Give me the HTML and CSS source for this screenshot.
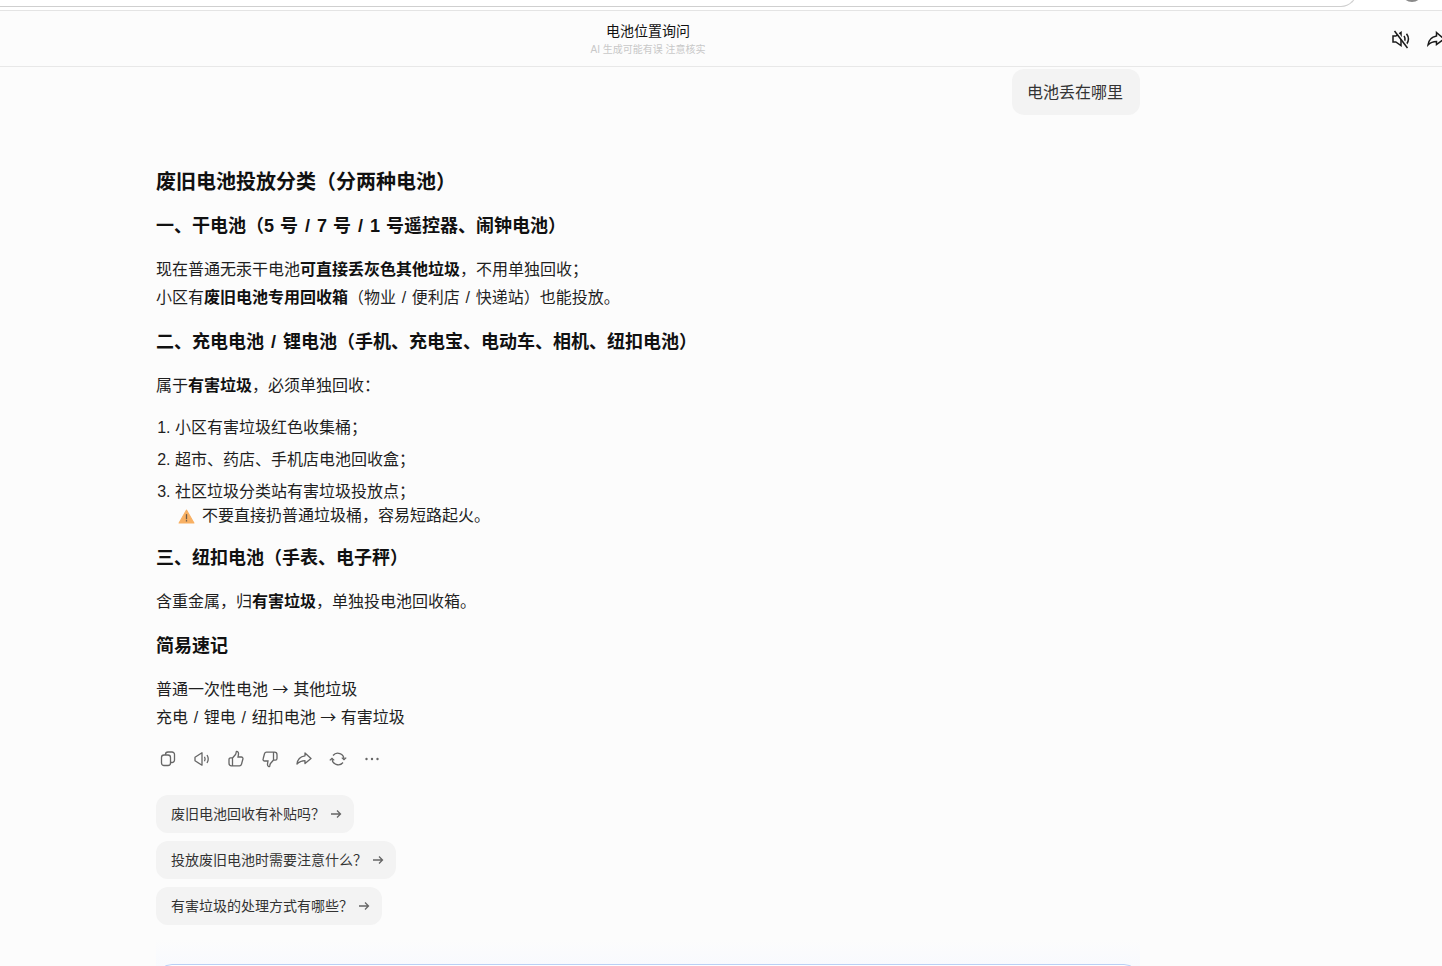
FILE: index.html
```html
<!DOCTYPE html>
<html lang="zh-CN">
<head>
    <meta charset="UTF-8">
    <meta name="viewport" content="width=device-width, initial-scale=1.0">
    <title>电池位置询问</title>
    <link rel="stylesheet" href="styles.css">
</head>
<body>
    <div class="browser-top">
        <div class="address-bar"></div>
        <div class="avatar"></div>
    </div>

    <div class="header">
        <div class="header-title">
            <div class="title">电池位置询问</div>
            <div class="subtitle">AI 生成可能有误 注意核实</div>
        </div>
        <div class="header-icons">
            <svg class="head-icon" viewBox="0 0 20 20">
                <path d="M2 7h2.800L10 3.500v13L4.800 13H2z"/>
                <path d="M13 7c1.200 1.800 1.200 4.200 0 6M15.500 4.800c2.400 3.200 2.400 7.200 0 10.400"/>
                <path class="slash-gap" d="M4.800 1.500l13 17"/>
                <path d="M3.500 2l13 17"/>
            </svg>
            <svg class="head-icon" viewBox="0 0 20 20">
                <path d="M10.500 3.500l7.500 6.500-7.500 5.500v-3c-3.500 0-6 1-8.500 3.500.5-4.500 3.500-8 8.500-9z"/>
            </svg>
        </div>
    </div>

    <div class="chat">
        <div class="user-row">
            <div class="user-bubble">电池丢在哪里</div>
        </div>

        <div class="answer">
            <h2>废旧电池投放分类（分两种电池）</h2>

            <h3>一、干电池（5 号 <span class="sep">/</span> 7 号 <span class="sep">/</span> 1 号遥控器、闹钟电池）</h3>
            <p>现在普通无汞干电池<strong>可直接丢灰色其他垃圾</strong>，不用单独回收；<br>
            小区有<strong>废旧电池专用回收箱</strong>（物业 / 便利店 / 快递站）也能投放。</p>

            <h3>二、充电电池 <span class="sep">/</span> 锂电池（手机、充电宝、电动车、相机、纽扣电池）</h3>
            <p>属于<strong>有害垃圾</strong>，必须单独回收：</p>
            <ol>
                <li>小区有害垃圾红色收集桶；</li>
                <li>超市、药店、手机店电池回收盒；</li>
                <li>社区垃圾分类站有害垃圾投放点；<br>
                    <span class="warning">
                        <svg class="warn-icon" viewBox="0 0 16 16">
                            <path d="M8 2L15 14.200H1z" fill="#f8b063" stroke="#f8b063" stroke-linejoin="round"/>
                            <rect x="7.400" y="5.800" width="1.200" height="4.800" fill="#6b5a48"/>
                            <rect x="7.400" y="11.400" width="1.200" height="1.300" fill="#6b5a48"/>
                        </svg>
                        不要直接扔普通垃圾桶，容易短路起火。
                    </span>
                </li>
            </ol>

            <h3>三、纽扣电池（手表、电子秤）</h3>
            <p>含重金属，归<strong>有害垃圾</strong>，单独投电池回收箱。</p>

            <h3>简易速记</h3>
            <p>普通一次性电池<span class="text-arrow"> → </span>其他垃圾<br>
            充电 / 锂电 / 纽扣电池<span class="text-arrow"> → </span>有害垃圾</p>
        </div>

        <div class="actions">
            <svg class="action-icon" viewBox="0 0 18 18">
                <rect x="2.500" y="5" width="9" height="10.500" rx="2.500"/>
                <path d="M6.500 5V4.500a2.500 2.500 0 0 1 2.500-2.500h4a2.500 2.500 0 0 1 2.500 2.500v5.500a2.500 2.500 0 0 1-2.500 2.500h-1.500"/>
            </svg>
            <svg class="action-icon" viewBox="0 0 18 18">
                <path d="M2 7.200L9 2.800v12.400L2 10.800z" stroke-linejoin="round"/>
                <path d="M11.500 6.800c.8 1.400.8 3 0 4.400M14 5c1.600 2.600 1.600 5.400 0 8"/>
            </svg>
            <svg class="action-icon" viewBox="0 0 18 18">
                <path d="M2 9.500c0-1 .7-1.700 1.700-1.700H5.500v8H4.500A2.500 2.500 0 0 1 2 13.300zM5.500 8l3-3.500c.6-.8.700-1.500.7-2.400 0-1.300 2.600-.8 2.300 2L11 7h3.400c1 0 1.800 1 1.500 2l-1.400 5.200c-.3 1-1.100 1.600-2 1.600H5.500"/>
            </svg>
            <svg class="action-icon" viewBox="0 0 18 18">
                <path d="M16 8.500c0 1-.7 1.700-1.700 1.700H12.500v-8h1A2.500 2.500 0 0 1 16 4.700zM12.500 10l-3 3.500c-.6.8-.7 1.500-.7 2.400 0 1.300-2.600.8-2.300-2L7 11H3.600c-1 0-1.800-1-1.500-2l1.400-5.200c.3-1 1.100-1.600 2-1.600h7"/>
            </svg>
            <svg class="action-icon" viewBox="0 0 18 18">
                <path d="M10 3l6 5.500-6 5v-2.800c-3.300 0-5.800 1-8 3.300.4-4.300 3.400-7.500 8-8.200z" stroke-linejoin="round"/>
            </svg>
            <svg class="action-icon" viewBox="0 0 18 18">
                <path d="M4 5.500A6.200 6.200 0 0 1 15 9.500"/>
                <path d="M14 12.500A6.200 6.200 0 0 1 3 8.500"/>
                <path d="M12.800 7.600L15 9.700l2.200-2.100M.8 10.400L3 8.300l2.200 2.100"/>
            </svg>
            <svg class="action-icon" viewBox="0 0 18 18">
                <circle cx="3.500" cy="9" r="1.200" class="dot"/>
                <circle cx="9" cy="9" r="1.200" class="dot"/>
                <circle cx="14.500" cy="9" r="1.200" class="dot"/>
            </svg>
        </div>

        <div class="suggestions">
            <div class="suggestion">废旧电池回收有补贴吗？<span class="arrow"><svg viewBox="0 0 12 12"><path d="M1 6h9.500M7 2.500L10.500 6 7 9.500"/></svg></span></div>
            <div class="suggestion">投放废旧电池时需要注意什么？<span class="arrow"><svg viewBox="0 0 12 12"><path d="M1 6h9.500M7 2.500L10.500 6 7 9.500"/></svg></span></div>
            <div class="suggestion">有害垃圾的处理方式有哪些？<span class="arrow"><svg viewBox="0 0 12 12"><path d="M1 6h9.500M7 2.500L10.500 6 7 9.500"/></svg></span></div>
        </div>

        <div class="input-area">
            <div class="input-box"></div>
        </div>
    </div>
</body>
</html>
```

FILE: styles.css
```css
* {
    margin: 0;
    padding: 0;
    box-sizing: border-box;
}

html, body {
    height: 966px;
    overflow: hidden;
}

body {
    font-family: "Liberation Sans", "Noto Sans CJK SC", sans-serif;
    background: #fcfcfc;
    color: #1f1f1f;
    font-size: 16px;
}

/* browser strip at the top */
.browser-top {
    height: 11px;
    background: #fff;
    border-bottom: 1px solid #e4e4e4;
    position: relative;
    overflow: hidden;
}

.address-bar {
    width: 1357px;
    height: 20px;
    margin-top: -13px;
    border-bottom: 1px solid #cfcfcf;
    border-right: 1px solid #cfcfcf;
    border-bottom-right-radius: 16px;
}

.avatar {
    position: absolute;
    top: -12px;
    left: 1403px;
    width: 18px;
    height: 14px;
    border-radius: 50%;
    background: #8a8a8a;
}

.header {
    height: 56px;
    border-bottom: 1px solid #e8e8e8;
    display: flex;
    justify-content: center;
    position: relative;
    padding-right: 146px;
}

.header-title {
    text-align: center;
    padding-top: 10px;
}

.title {
    font-size: 14px;
    line-height: 20px;
    color: #111;
}

.subtitle {
    font-size: 10px;
    line-height: 16px;
    margin-top: 1px;
    color: #c8c8c8;
}

.header-icons {
    position: absolute;
    top: 18px;
    left: 1391px;
    display: flex;
    gap: 15px;
}

.head-icon {
    width: 20px;
    height: 20px;
    fill: none;
    stroke: #1a1a1a;
    stroke-width: 1.500;
    flex-shrink: 0;
}

.head-icon .slash-gap {
    stroke: #fcfcfc;
    stroke-width: 1.500;
}

.chat {
    width: 984px;
    margin-left: 156px;
}

.user-row {
    display: flex;
    justify-content: flex-end;
    padding-top: 2px;
}

.user-bubble {
    background: #f3f3f3;
    border-radius: 12px;
    padding: 1px 17px 0 15px;
    height: 46px;
    line-height: 46px;
    color: #333;
}

.answer {
    margin-top: 52px;
    word-spacing: 1.250px;
}

.answer h2 {
    font-size: 20px;
    line-height: 30px;
    font-weight: 700;
    color: #111;
    margin-bottom: 15px;
}

.answer h3 {
    font-size: 18px;
    line-height: 28px;
    font-weight: 700;
    color: #111;
    margin-bottom: 16px;
    word-spacing: 1px;
}

.answer h3 .sep {
    margin: 0 1px;
}

.answer p {
    line-height: 28px;
    margin-bottom: 16px;
}

.answer strong {
    font-weight: 700;
    color: #111;
}

.text-arrow {
    font-family: "Noto Sans CJK SC", sans-serif;
    line-height: 1;
    word-spacing: 1px;
}

.answer ol {
    margin: 0 0 12px 19px;
}

.answer li {
    line-height: 24px;
    margin-bottom: 8px;
    word-spacing: 0;
}

.answer li:last-child {
    margin-bottom: 0;
}

.warning {
    display: inline-flex;
    align-items: center;
    gap: 7px;
    margin-left: 3px;
}

.warn-icon {
    width: 17px;
    height: 17px;
}

.actions {
    display: flex;
    gap: 16px;
    margin-top: 18px;
    padding-left: 3px;
}

.action-icon {
    width: 18px;
    height: 18px;
    fill: none;
    stroke: #666;
    stroke-width: 1.300;
}

.action-icon .dot {
    fill: #666;
    stroke: none;
}

.suggestions {
    display: flex;
    flex-direction: column;
    align-items: flex-start;
    gap: 8px;
    margin-top: 27px;
}

.suggestion {
    height: 38px;
    background: #f3f3f3;
    border-radius: 12px;
    padding: 0 12px 2px 15px;
    display: flex;
    align-items: center;
    font-size: 14px;
    color: #333;
}

.arrow {
    margin: 2px 0 0 5px;
    width: 12px;
    height: 12px;
    display: flex;
}

.arrow svg {
    width: 12px;
    height: 12px;
    fill: none;
    stroke: #666;
    stroke-width: 1.300;
}

/* only the top edge of the composer is on screen */
.input-area {
    margin-top: 14px;
    height: 27px;
    padding-top: 25px;
    overflow: hidden;
    background: linear-gradient(to bottom, rgba(248, 250, 254, 0), #f8fafe);
}

.input-box {
    height: 80px;
    border: 1px solid #b9d0f5;
    border-radius: 16px;
    background: #fff;
}
```
